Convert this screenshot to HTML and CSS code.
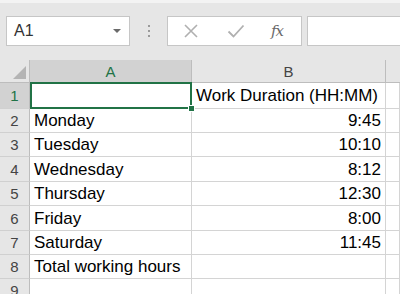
FILE: index.html
```html
<!DOCTYPE html>
<html>
    <head>
        <title>Work Duration</title>
        <link rel="stylesheet" href="styles.css">
    </head>
    <body>
        <div class="toolbar">
            <div class="namebox">
                <span class="cellref">A1</span>
                <span class="arrow"></span>
            </div>
            <div class="dots">
                <span></span><span></span><span></span>
            </div>
            <div class="fbuttons">
                <svg class="ficon" width="16" height="16" viewBox="0 0 16 16">
                    <path d="M2 2 L14 14 M14 2 L2 14" stroke="#b0b0b0" stroke-width="1.6" fill="none"/>
                </svg>
                <svg class="ficon" width="18" height="16" viewBox="0 0 18 16">
                    <path d="M1.5 8.5 L6.5 13.5 L16.5 2.5" stroke="#b0b0b0" stroke-width="1.8" fill="none"/>
                </svg>
                <span class="fx">fx</span>
            </div>
            <div class="formula"></div>
        </div>

        <div class="sheet">
            <div class="corner"><span class="tri"></span></div>
            <div class="colhead sel">A</div>
            <div class="colhead">B</div>
            <div class="colhead last"></div>

            <div class="rowhead sel">1</div>
            <div class="cell"></div>
            <div class="cell">Work Duration (HH:MM)</div>
            <div class="cell"></div>

            <div class="rowhead">2</div>
            <div class="cell">Monday</div>
            <div class="cell num">9:45</div>
            <div class="cell"></div>

            <div class="rowhead">3</div>
            <div class="cell">Tuesday</div>
            <div class="cell num">10:10</div>
            <div class="cell"></div>

            <div class="rowhead">4</div>
            <div class="cell">Wednesday</div>
            <div class="cell num">8:12</div>
            <div class="cell"></div>

            <div class="rowhead">5</div>
            <div class="cell">Thursday</div>
            <div class="cell num">12:30</div>
            <div class="cell"></div>

            <div class="rowhead">6</div>
            <div class="cell">Friday</div>
            <div class="cell num">8:00</div>
            <div class="cell"></div>

            <div class="rowhead">7</div>
            <div class="cell">Saturday</div>
            <div class="cell num">11:45</div>
            <div class="cell"></div>

            <div class="rowhead">8</div>
            <div class="cell">Total working hours</div>
            <div class="cell"></div>
            <div class="cell"></div>

            <div class="rowhead">9</div>
            <div class="cell"></div>
            <div class="cell"></div>
            <div class="cell"></div>

            <div class="selbox"><span class="handle"></span></div>
        </div>
    </body>
</html>
```

FILE: styles.css
```css
body {
    margin: 0;
    background: #e6e6e6;
    font-family: "Liberation Sans", Arial, sans-serif;
    overflow: hidden;
}

.toolbar {
    height: 60px;
    box-sizing: border-box;
    border-top: 3px solid #f3f3f3;
    display: flex;
    align-items: flex-start;
    padding: 13px 0 0 6px;
}
.namebox {
    width: 124px;
    height: 30px;
    box-sizing: border-box;
    background: #fff;
    border: 1px solid #c6c6c6;
    display: flex;
    align-items: center;
    justify-content: space-between;
    padding: 0 8px 0 7px;
}
.cellref {
    font-size: 16px;
    color: #333;
}
.arrow {
    width: 0;
    height: 0;
    border-left: 4px solid transparent;
    border-right: 4px solid transparent;
    border-top: 4px solid #6a6a6a;
}
.dots {
    width: 37px;
    height: 30px;
    display: flex;
    flex-direction: column;
    align-items: center;
    justify-content: center;
    gap: 3px;
}
.dots span {
    width: 2px;
    height: 2px;
    background: #9a9a9a;
}
.fbuttons {
    width: 135px;
    height: 30px;
    box-sizing: border-box;
    background: #fff;
    border: 1px solid #c6c6c6;
    display: flex;
    align-items: center;
    padding: 0 0 0 15px;
    gap: 28px;
}
.ficon {
    display: block;
}
.fx {
    font-family: "DejaVu Serif", "Liberation Serif", serif;
    font-style: italic;
    font-size: 15px;
    color: #6a6a6a;
    letter-spacing: -1px;
    margin-left: -2px;
}
.formula {
    flex: 1;
    height: 30px;
    box-sizing: border-box;
    margin-left: 5px;
    background: #fff;
    border: 1px solid #c6c6c6;
    border-right: none;
}

.sheet {
    position: relative;
    display: grid;
    grid-template-columns: 30px 162px 194px 1fr;
    grid-template-rows: 23px 26px 24px 24px 25px 24px 25px 24px 24px 24px;
    background: #fff;
}
.corner {
    position: relative;
    background: #e6e6e6;
    border-right: 1px solid #bdbdbd;
    border-bottom: 1px solid #bdbdbd;
}
.tri {
    position: absolute;
    right: 3px;
    bottom: 3px;
    width: 0;
    height: 0;
    border-left: 13px solid transparent;
    border-bottom: 13px solid #b4b4b4;
}
.colhead {
    background: #e6e6e6;
    border-right: 1px solid #bdbdbd;
    border-bottom: 1px solid #bdbdbd;
    display: flex;
    align-items: center;
    justify-content: center;
    font-size: 15px;
    color: #444;
}
.colhead.sel {
    background: #d2d2d2;
    border-bottom: 1px solid #ababab;
    color: #217346;
}
.colhead.last {
    border-right: none;
}
.rowhead {
    background: #e6e6e6;
    border-right: 1px solid #bdbdbd;
    border-bottom: 1px solid #d0d0d0;
    display: flex;
    align-items: center;
    justify-content: center;
    font-size: 15px;
    color: #444;
}
.rowhead.sel {
    background: #d2d2d2;
    color: #217346;
}
.cell {
    border-right: 1px solid #d4d4d4;
    border-bottom: 1px solid #d4d4d4;
    display: flex;
    align-items: center;
    padding: 1px 4px 0 4px;
    font-size: 17px;
    color: #000;
    white-space: nowrap;
}
.cell.num {
    justify-content: flex-end;
}

.selbox {
    position: absolute;
    left: 30px;
    top: 22px;
    width: 162px;
    height: 27px;
    box-sizing: border-box;
    border: 2px solid #217346;
    pointer-events: none;
}
.handle {
    position: absolute;
    right: -5px;
    bottom: -5px;
    width: 5px;
    height: 5px;
    background: #217346;
    border: 1px solid #fff;
}
```
